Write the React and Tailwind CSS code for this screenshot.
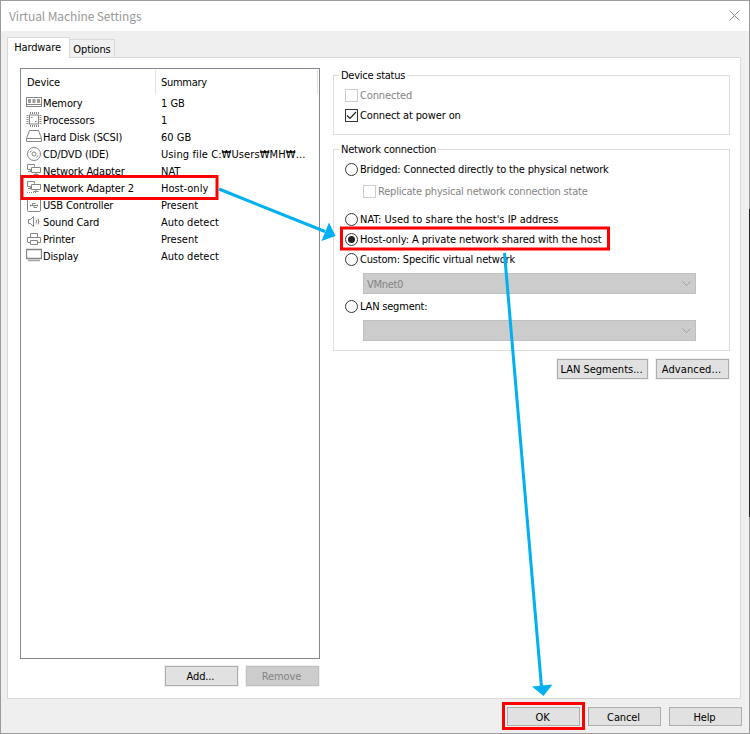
import React from 'react';
import clsx from 'clsx';

const icons = {
  memory: (
    <>
      <rect x="0.5" y="2.5" width="15" height="9" />
      <path d="M0 9.5h16" />
      <path d="M2 4h3v4h-3zM6.500 4h3v4h-3zM11 4h3v4h-3z" fill="#9a9a9a" stroke="none" />
    </>
  ),
  cpu: (
    <>
      <rect x="3.500" y="3" width="9" height="9" />
      <path d="M4 1h9M4 14h9M1.500 3v10M14.500 3v10" strokeWidth="2" strokeDasharray="1 1" />
      <path d="M5 5.500h1.500M9 9.500h1.500" />
    </>
  ),
  disk: <path d="M3.500 1.500h9l3 8v3h-15v-3zM0.500 9.500h15" />,
  cd: (
    <>
      <circle cx="8" cy="8" r="6.500" />
      <circle cx="8" cy="8" r="2" />
      <path d="M4 6.500l1.500-2M10.500 11.500l1.500-2" />
    </>
  ),
  network: (
    <>
      <path d="M8.500 3.500v-2h-7v5h3M4.500 6.500v2M2 8.500h3" />
      <path d="M5.500 4.500h9v5h-9zM10 9.500v2M7.500 11.500h5" />
      <path d="M1 12.500h9" strokeDasharray="1 1" />
    </>
  ),
  usb: (
    <>
      <rect x="1.500" y="1.500" width="13" height="13" rx="1" />
      <path d="M4 8.500h8M6.500 8.500v-2h3M8 8.500v2h3" />
      <path d="M4.500 7.500v2M11.500 7.500v2" />
    </>
  ),
  sound: (
    <>
      <path d="M2.500 5.500h2l3-3v10l-3-3h-2z" />
      <path d="M10 5.500q1 2 0 4M12 4.500q1.500 3 0 6" />
    </>
  ),
  printer: (
    <>
      <path d="M4.500 6.500v-4h7v4M4.500 11.500h-3v-5h13v5h-3" />
      <path d="M4.500 9.500h7v4h-7z" />
    </>
  ),
  display: (
    <>
      <path d="M0.500 1.500h15v9h-15z" strokeWidth="1.300" />
      <path d="M2 12.500h12" stroke="#a5a5a5" strokeWidth="1.500" />
    </>
  ),
};

const devices = [
  { icon: 'memory', name: 'Memory', summary: '1 GB' },
  { icon: 'cpu', name: 'Processors', summary: '1' },
  { icon: 'disk', name: 'Hard Disk (SCSI)', summary: '60 GB' },
  { icon: 'cd', name: 'CD/DVD (IDE)', summary: 'Using file C:₩Users₩MH₩...' },
  { icon: 'network', name: 'Network Adapter', summary: 'NAT' },
  { icon: 'network', name: 'Network Adapter 2', summary: 'Host-only' },
  { icon: 'usb', name: 'USB Controller', summary: 'Present' },
  { icon: 'sound', name: 'Sound Card', summary: 'Auto detect' },
  { icon: 'printer', name: 'Printer', summary: 'Present' },
  { icon: 'display', name: 'Display', summary: 'Auto detect' },
];

const Button = ({ children, disabled, className }) => (
  <button
    className={clsx(
      'border flex items-center justify-center ring-1 ring-[#f0f0f0] pr-[2px]',
      disabled ? 'bg-[#cccccc] border-[#bfbfbf] text-[#838383]' : 'bg-[#e1e1e1] border-[#adadad]',
      className
    )}
  >
    {children}
  </button>
);

const Checkbox = ({ label, checked, disabled, className }) => (
  <label className={clsx('h-5 flex items-center gap-[2px]', disabled && 'text-[#838383]', className)}>
    <span className={clsx('size-[13px] border bg-white', disabled ? 'border-[#cccccc]' : 'border-[#333333]')}>
      {checked && (
        <svg viewBox="0 0 11 11" className="size-[11px]" fill="none" stroke="#222" strokeWidth="1.2">
          <path d="M1 5.500l3 3 6-6.500" />
        </svg>
      )}
    </span>
    {label}
  </label>
);

const Radio = ({ label, checked, className }) => (
  <label className={clsx('h-5 flex items-center gap-[2px]', className)}>
    <span className="size-[13px] rounded-full border border-[#333333] flex items-center justify-center">
      {checked && <span className="size-[7px] rounded-full bg-[#222222]" />}
    </span>
    {label}
  </label>
);

const Select = ({ value }) => (
  <div className="w-[333px] h-[21px] ml-[18px] pl-[3px] pr-1 border border-[#bfbfbf] bg-[#cccccc] text-[#838383] flex items-center justify-between">
    <span className="tracking-[-0.3px] pt-px">{value}</span>
    <svg viewBox="0 0 9 6" className="w-[9px] h-[6px]" fill="none" stroke="#a0a0a0">
      <path d="M0.500 0.500l4 4 4-4" />
    </svg>
  </div>
);

// Highlight boxes and arrows drawn over the dialog
const Annotations = () => (
  <svg viewBox="0 0 750 734" className="absolute inset-0 w-[750px] h-[734px] pointer-events-none">
    <path d="M749.500 209v308" stroke="#222" />
    <g fill="none" stroke="#fe0000" strokeWidth="3">
      <rect x="22" y="176.500" width="195" height="22" />
      <rect x="341.500" y="228" width="267" height="21" />
      <rect x="503.500" y="703.500" width="80" height="25" />
    </g>
    <g stroke="#00b0f0" strokeWidth="3" fill="none">
      <path d="M219 189L325 231.500" />
      <path d="M504.500 253L541.500 687" />
    </g>
    <g fill="#00b0f0">
      <path d="M335.500 236L329 222.500L321.500 241z" />
      <path d="M543.500 696L552.500 684.500L532 686.500z" />
    </g>
  </svg>
);

const App = () => {
  return (
    <div className="relative w-[750px] h-[734px] border border-[#9b9b9b] bg-[#efefef] flex flex-col text-black text-[11px] leading-[15px] tracking-[-0.13px] whitespace-nowrap font-['DejaVu_Sans_Condensed','Noto_Sans_CJK_KR',sans-serif]">
      {/* Title bar */}
      <div className="h-[30px] shrink-0 bg-white flex items-center justify-between pl-2 pr-[9px] pb-[2px]">
        <span className="text-[#999999] font-['Noto_Sans_CJK_KR',sans-serif] text-[12px] tracking-[-0.1px]">Virtual Machine Settings</span>
        <svg viewBox="0 0 11 11" className="size-[11px]" fill="none" stroke="#888">
          <path d="M0.500 0.500l10 10M10.500 0.500l-10 10" />
        </svg>
      </div>

      {/* Tabs */}
      <div className="flex items-end h-[26px] shrink-0 pl-[6px]">
        <div className="h-[21px] w-[63px] -mb-px z-10 bg-white border border-b-0 border-[#d9d9d9] flex items-center justify-center pr-[2px] pb-px">Hardware</div>
        <div className="h-[18px] w-[45px] border border-l-0 border-b-0 border-[#d9d9d9] bg-[#f0f0f0] flex items-center justify-center pt-[2px]">Options</div>
      </div>

      {/* Hardware panel */}
      <div className="ml-[6px] w-[734px] h-[642px] shrink-0 border border-[#d9d9d9] bg-white pl-3 pt-[10px] flex">
        <div className="w-[300px]">
          <div className="h-[591px] border border-[#828790]">
            <div className="h-[26px] flex pt-px pb-px">
              <div className="w-[135px] border-r border-[#e2e2e2] pl-[6px] pt-[5px]">Device</div>
              <div className="w-[162px] border-r border-[#e2e2e2] pl-[5px] pt-[5px] tracking-[-0.3px]">Summary</div>
            </div>
            {devices.map((device, index) => (
              <div key={index} className="h-[17px] flex items-center">
                <svg viewBox="0 0 16 16" className="size-4 ml-[5px] shrink-0 self-start" fill="none" stroke="#858585">
                  {icons[device.icon]}
                </svg>
                <span className="w-[118px] pl-px">{device.name}</span>
                <span className={clsx('pl-px', device.icon === 'cd' ? 'tracking-[0.1px]' : 'tracking-[0px]')}>{device.summary}</span>
              </div>
            ))}
          </div>
          <div className="flex justify-end gap-2 mt-[7px] pr-px">
            <Button className="w-[73px] h-5">Add...</Button>
            <Button className="w-[73px] h-5" disabled>Remove</Button>
          </div>
        </div>

        <div className="ml-[13px] w-[397px]">
          <fieldset className="h-[67px] border border-[#dcdcdc] pl-[11px]">
            <legend className="-ml-[6px] px-[2px] h-[15px] tracking-[-0.25px]">Device status</legend>
            <div className="mt-[2px]">
              <Checkbox label="Connected" disabled />
              <Checkbox label="Connect at power on" checked />
            </div>
          </fieldset>

          <fieldset className="h-[209px] mt-[7px] border border-[#dcdcdc] pl-[11px]">
            <legend className="-ml-[6px] px-[2px] h-[15px] tracking-[-0.22px]">Network connection</legend>
            <div className="mt-[2px]">
              <Radio label="Bridged: Connected directly to the physical network" className="tracking-[-0.18px]" />
              <div className="ml-[18px] mt-[2px]">
                <Checkbox label="Replicate physical network connection state" disabled className="tracking-[-0.21px]" />
              </div>
              <div className="mt-2">
                <Radio label="NAT: Used to share the host's IP address" className="tracking-[-0.01px]" />
                <Radio label="Host-only: A private network shared with the host" className="tracking-[-0.09px]" checked />
                <Radio label="Custom: Specific virtual network" className="tracking-[-0.19px]" />
              </div>
              <div className="mt-1">
                <Select value="VMnet0" />
              </div>
              <div className="mt-[2px]">
                <Radio label="LAN segment:" className="tracking-[-0.2px]" />
              </div>
              <div className="mt-1">
                <Select value="" />
              </div>
            </div>
          </fieldset>

          <div className="flex justify-end gap-2 mt-2 pr-px">
            <Button className="w-[91px] h-5 tracking-[0px]">LAN Segments...</Button>
            <Button className="w-[73px] h-5 tracking-[0.1px]">Advanced...</Button>
          </div>
        </div>
      </div>

      {/* Dialog buttons */}
      <div className="flex justify-end gap-2 mt-2 pr-[7px]">
        <Button className="w-[73px] h-[19px] pt-[2px]">OK</Button>
        <Button className="w-[73px] h-[19px] pt-[2px]">Cancel</Button>
        <Button className="w-[73px] h-[19px] pt-[2px]">Help</Button>
      </div>

      <div className="absolute -left-px -top-px">
        <Annotations />
      </div>
    </div>
  );
};

export default App;
